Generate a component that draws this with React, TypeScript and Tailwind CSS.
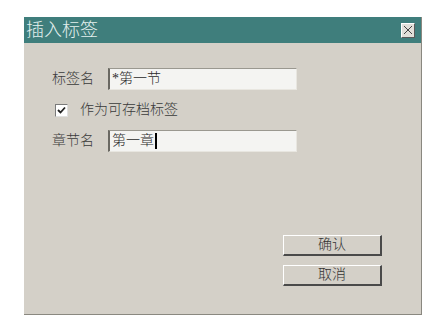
import React from 'react';

const font = { fontFamily: '"Liberation Serif", "Noto Sans CJK SC", serif' };

function Field({ label, value, caret }: { label: string; value: string; caret?: boolean }) {
  return (
    <div className="flex items-center h-[22px]">
      <span className="w-[56px] text-[14px] text-[#3a3a3a] font-light leading-none">{label}</span>
      <div className="w-[189px] h-[22px] bg-[#f4f4f2] border-t border-l-2 border-t-[#9a9890] border-l-[#6a6862] border-b border-r border-b-[#e8e6e0] border-r-[#e8e6e0] flex items-center pl-[2px] text-[14px] text-[#2a2a2a] font-light leading-none">
        {value}
        {caret && <span className="inline-block w-[2px] h-[16px] bg-black ml-[1px]" />}
      </div>
    </div>
  );
}

function Btn({ children }: { children: React.ReactNode }) {
  return (
    <button className="w-[99px] h-[21px] bg-[#d4d0c8] border-t border-l border-t-white border-l-white border-b-2 border-r-2 border-b-[#4a4a4a] border-r-[#4a4a4a] text-[14px] text-[#333] font-light leading-none flex items-center justify-center">
      {children}
    </button>
  );
}

export default function App() {
  return (
    <div className="w-[443px] h-[332px] bg-white overflow-hidden pt-[17px] pl-[24px]" style={font}>
      <div className="w-[398px] h-[298px] bg-[#d4d0c8] border-r border-b border-r-[#8a8880] border-b-[#8a8880] flex flex-col">
        <div className="h-[26px] bg-[#3f7e7c] flex items-center justify-between pl-[2px] pr-[6px]">
          <span className="text-[18px] text-[#e4f0ee] font-light leading-none">插入标签</span>
          <div className="w-[14px] h-[15px] bg-[#e2e0da] border-t border-l border-white border-b border-r border-b-[#5a5a5a] border-r-[#5a5a5a] flex items-center justify-center">
            <svg width="10" height="10" viewBox="0 0 10 10">
              <path d="M1 1 L9 9 M9 1 L1 9" stroke="#444" strokeWidth="1" fill="none" />
            </svg>
          </div>
        </div>
        <div className="flex-1 flex flex-col pl-[28px] pt-[25px]">
          <Field label="标签名" value="*第一节" />
          <div className="flex items-center mt-[13px] h-[14px]">
            <div className="ml-[3px] w-[13px] h-[13px] bg-white border-t border-l border-t-[#7a7a7a] border-l-[#7a7a7a] border-b border-r border-b-[#e0e0e0] border-r-[#e0e0e0] flex items-center justify-center">
              <svg width="9" height="9" viewBox="0 0 9 9">
                <path d="M1 4 L3.5 6.5 L8 1.5" stroke="#222" strokeWidth="1.8" fill="none" />
              </svg>
            </div>
            <span className="ml-[12px] text-[14px] text-[#3a3a3a] font-light leading-none">作为可存档标签</span>
          </div>
          <div className="mt-[13px]">
            <Field label="章节名" value="第一章" caret />
          </div>
          <div className="flex-1" />
          <div className="flex flex-col items-end gap-[9px] pr-[39px] pb-[28px]">
            <Btn>确认</Btn>
            <Btn>取消</Btn>
          </div>
        </div>
      </div>
    </div>
  );
}
